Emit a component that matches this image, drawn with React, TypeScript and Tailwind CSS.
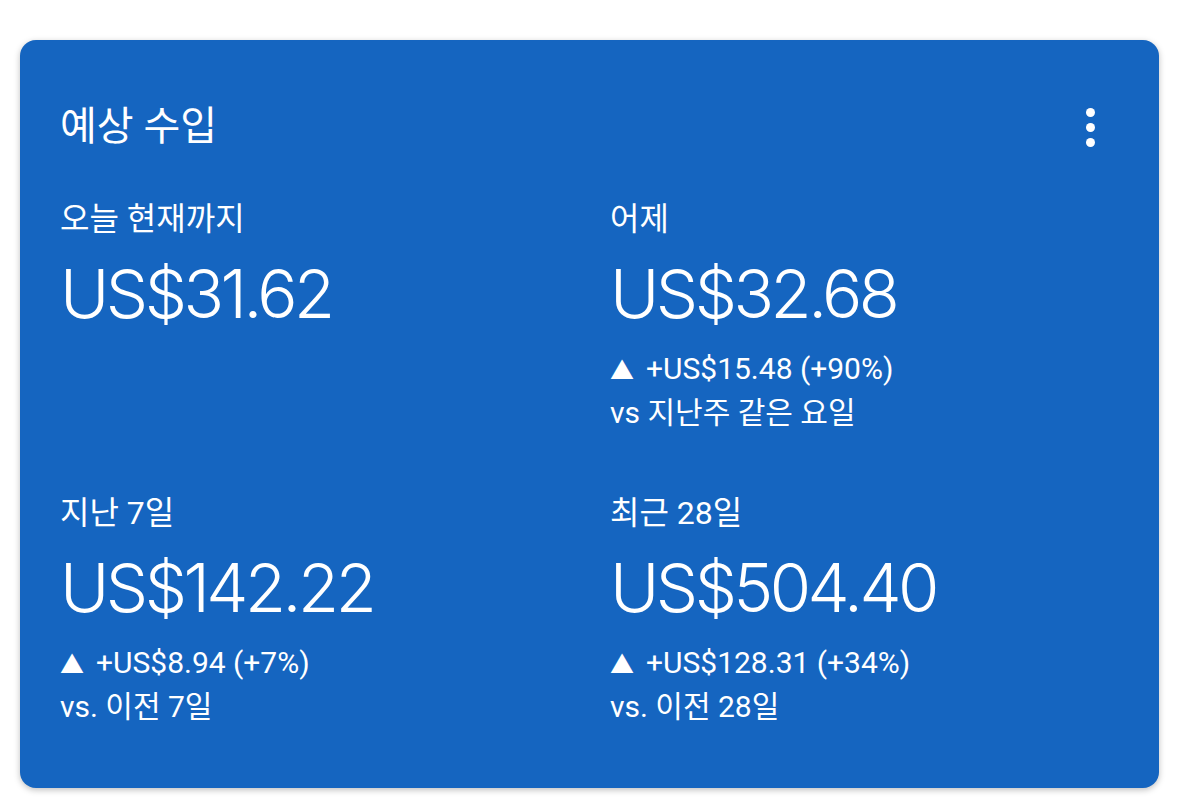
const KR = "font-['Roboto','Noto_Sans_CJK_KR',sans-serif]";

type Stat = {
  label: string;
  value: string;
  change?: string;
  compare?: string;
};

const stats: Stat[] = [
  { label: '오늘 현재까지', value: 'US$31.62' },
  {
    label: '어제',
    value: 'US$32.68',
    change: '+US$15.48 (+90%)',
    compare: 'vs 지난주 같은 요일',
  },
  {
    label: '지난 7일',
    value: 'US$142.22',
    change: '+US$8.94 (+7%)',
    compare: 'vs. 이전 7일',
  },
  {
    label: '최근 28일',
    value: 'US$504.40',
    change: '+US$128.31 (+34%)',
    compare: 'vs. 이전 28일',
  },
];

const StatBlock = ({ stat }: { stat: Stat }) => (
  <div className="flex flex-col">
    <div className={`${KR} text-[32px] leading-[40px]`}>{stat.label}</div>
    <div className="mt-[15px] font-['Inter',sans-serif] text-[67px] leading-[80px] font-light tracking-[-3.5px]">
      {stat.value}
    </div>
    {stat.change && (
      <>
        <div className={`${KR} mt-[14px] text-[30px] leading-[42px]`}>
          <span className="mr-[12px] text-[24px]">▲</span>
          {stat.change}
        </div>
        <div className={`${KR} text-[30px] leading-[42px]`}>{stat.compare}</div>
      </>
    )}
  </div>
);

export default function App() {
  return (
    <div className="min-h-screen bg-white px-5 pt-10">
      <div className="rounded-2xl bg-[#1565c0] px-10 pt-[63px] pb-[60px] text-white shadow-[0_2px_6px_rgba(0,0,0,0.25)]">
        <div className="flex items-center justify-between">
          <h1 className={`${KR} text-[40px] leading-[48px] font-normal`}>예상 수입</h1>
          <button className="mr-6 flex flex-col items-center gap-[6px]">
            <span className="h-[9px] w-[9px] rounded-full bg-white" />
            <span className="h-[9px] w-[9px] rounded-full bg-white" />
            <span className="h-[9px] w-[9px] rounded-full bg-white" />
          </button>
        </div>

        <div className="mt-12 grid grid-cols-[550px_1fr] gap-y-[59px]">
          {stats.map((s) => (
            <StatBlock key={s.label} stat={s} />
          ))}
        </div>
      </div>
    </div>
  );
}
